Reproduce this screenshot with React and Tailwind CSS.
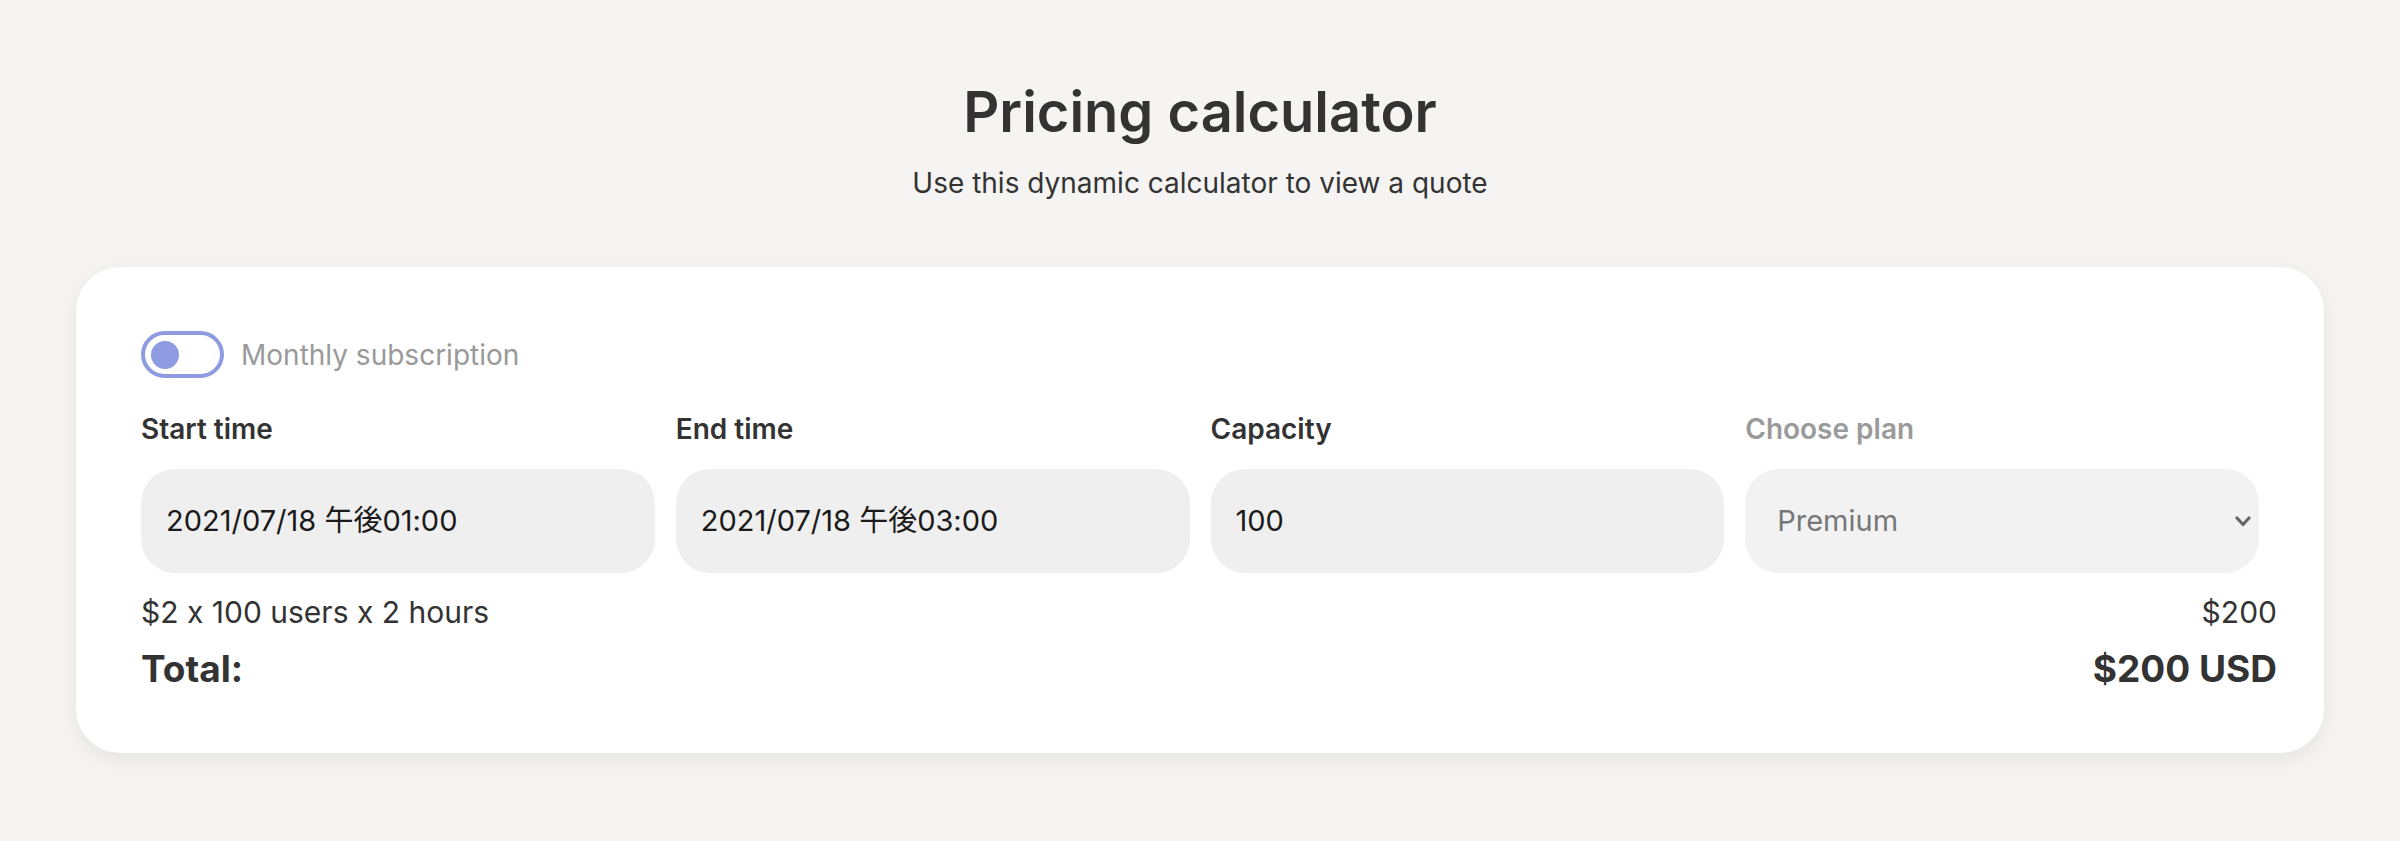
import React from 'react'

const font = { fontFamily: 'Inter, "Noto Sans CJK JP", sans-serif', fontFeatureSettings: '"calt" 0' }

function Field({ label, value, muted }) {
  return (
    <div className="flex flex-col">
      <div className={`h-[30px] leading-[30px] text-[28px] font-semibold ${muted ? 'text-[#9a9a9a]' : 'text-[#333]'}`}>
        {label}
      </div>
      <div className="mt-[25px] h-[104px] rounded-[34px] bg-[#efefef] flex items-center px-[25px] text-[29px] text-[#1a1a1a]">
        {value}
      </div>
    </div>
  )
}

export default function App() {
  return (
    <div className="min-h-screen w-full bg-[#f5f4f2] pt-[84px] pb-[80px]" style={font}>
      {/* Heading */}
      <div className="text-center">
        <h1 className="h-[56px] leading-[56px] text-[56px] font-semibold text-[#333]">Pricing calculator</h1>
        <p className="mt-[28px] h-[30px] leading-[30px] text-[28px] text-[#333]">Use this dynamic calculator to view a quote</p>
      </div>

      {/* Card */}
      <div className="mx-[76px] mt-[69px] bg-white rounded-[44px] shadow-[0_6px_20px_rgba(0,0,0,0.07)] pl-[65px] pr-[65px] pt-[64px] pb-[64px]">
        {/* Toggle */}
        <div className="flex items-center h-[47px]">
          <div className="w-[83px] h-[47px] rounded-full border-[4px] border-[#8f9be0] flex items-center pl-[6px]">
            <div className="w-[28px] h-[28px] rounded-full bg-[#8f9be0]" />
          </div>
          <span className="ml-[17px] text-[28px] text-[#999]">Monthly subscription</span>
        </div>

        {/* Fields */}
        <div className="mt-[36px] grid grid-cols-4 gap-x-[21px]">
          <Field label="Start time" value="2021/07/18 午後01:00" />
          <Field label="End time" value="2021/07/18 午後03:00" />
          <Field label="Capacity" value="100" />
          <div className="flex flex-col">
            <div className="h-[30px] leading-[30px] text-[28px] font-semibold text-[#9a9a9a]">Choose plan</div>
            <div className="mt-[25px] h-[104px] rounded-[34px] bg-[#f2f2f2] flex items-center justify-between pl-[32px] pr-[8px] text-[29px] text-[#777]">
              <span>Premium</span>
              <svg width="16" height="11" viewBox="0 0 16 11" fill="none">
                <path d="M2 2 L8 8.5 L14 2" stroke="#666" strokeWidth="3.2" strokeLinecap="round" strokeLinejoin="round" />
              </svg>
            </div>
          </div>
        </div>

        {/* Summary */}
        <div className="mr-[-18px]">
          <div className="mt-[24px] flex justify-between h-[30px] leading-[30px] text-[30px] text-[#333]">
            <span>$2 x 100 users x 2 hours</span>
            <span>$200</span>
          </div>
          <div className="mt-[22px] flex justify-between h-[40px] leading-[40px] text-[37px] font-bold text-[#333]">
            <span>Total:</span>
            <span>$200 USD</span>
          </div>
        </div>
      </div>
    </div>
  )
}
